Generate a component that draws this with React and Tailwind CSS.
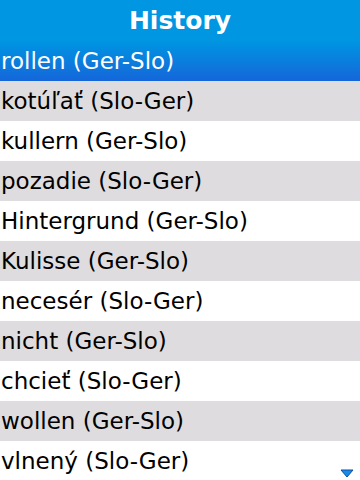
const ITEMS = [
  'kotúľať (Slo-Ger)',
  'kullern (Ger-Slo)',
  'pozadie (Slo-Ger)',
  'Hintergrund (Ger-Slo)',
  'Kulisse (Ger-Slo)',
  'necesér (Slo-Ger)',
  'nicht (Ger-Slo)',
  'chcieť (Slo-Ger)',
  'wollen (Ger-Slo)',
  'vlnený (Slo-Ger)',
]

export default function App() {
  return (
    <div className="relative h-[480px] w-[360px] overflow-hidden bg-white font-['DejaVu_Sans',sans-serif]">
      <div className="flex h-[41px] items-center justify-center bg-[#0096e2] text-[25px] font-bold text-white">
        History
      </div>
      <div className="flex h-[40px] items-center bg-gradient-to-b from-[#0095e2] to-[#1566d9] pl-[1px] text-[23px] text-white">
        rollen (Ger-Slo)
      </div>
      {ITEMS.map((item, i) => (
        <div
          key={item}
          className={`flex h-[40px] items-center pl-[1px] text-[23px] text-black ${i % 2 === 0 ? 'bg-[#dedcde]' : 'bg-white'}`}
        >
          {item}
        </div>
      ))}
      <svg className="absolute bottom-[2px] right-[6px]" width="14" height="9" viewBox="0 0 14 9">
        <path d="M1 1 L13 1 L7 8 Z" fill="#1a8ae8" stroke="#0b4f9e" strokeWidth="1" />
      </svg>
    </div>
  )
}
